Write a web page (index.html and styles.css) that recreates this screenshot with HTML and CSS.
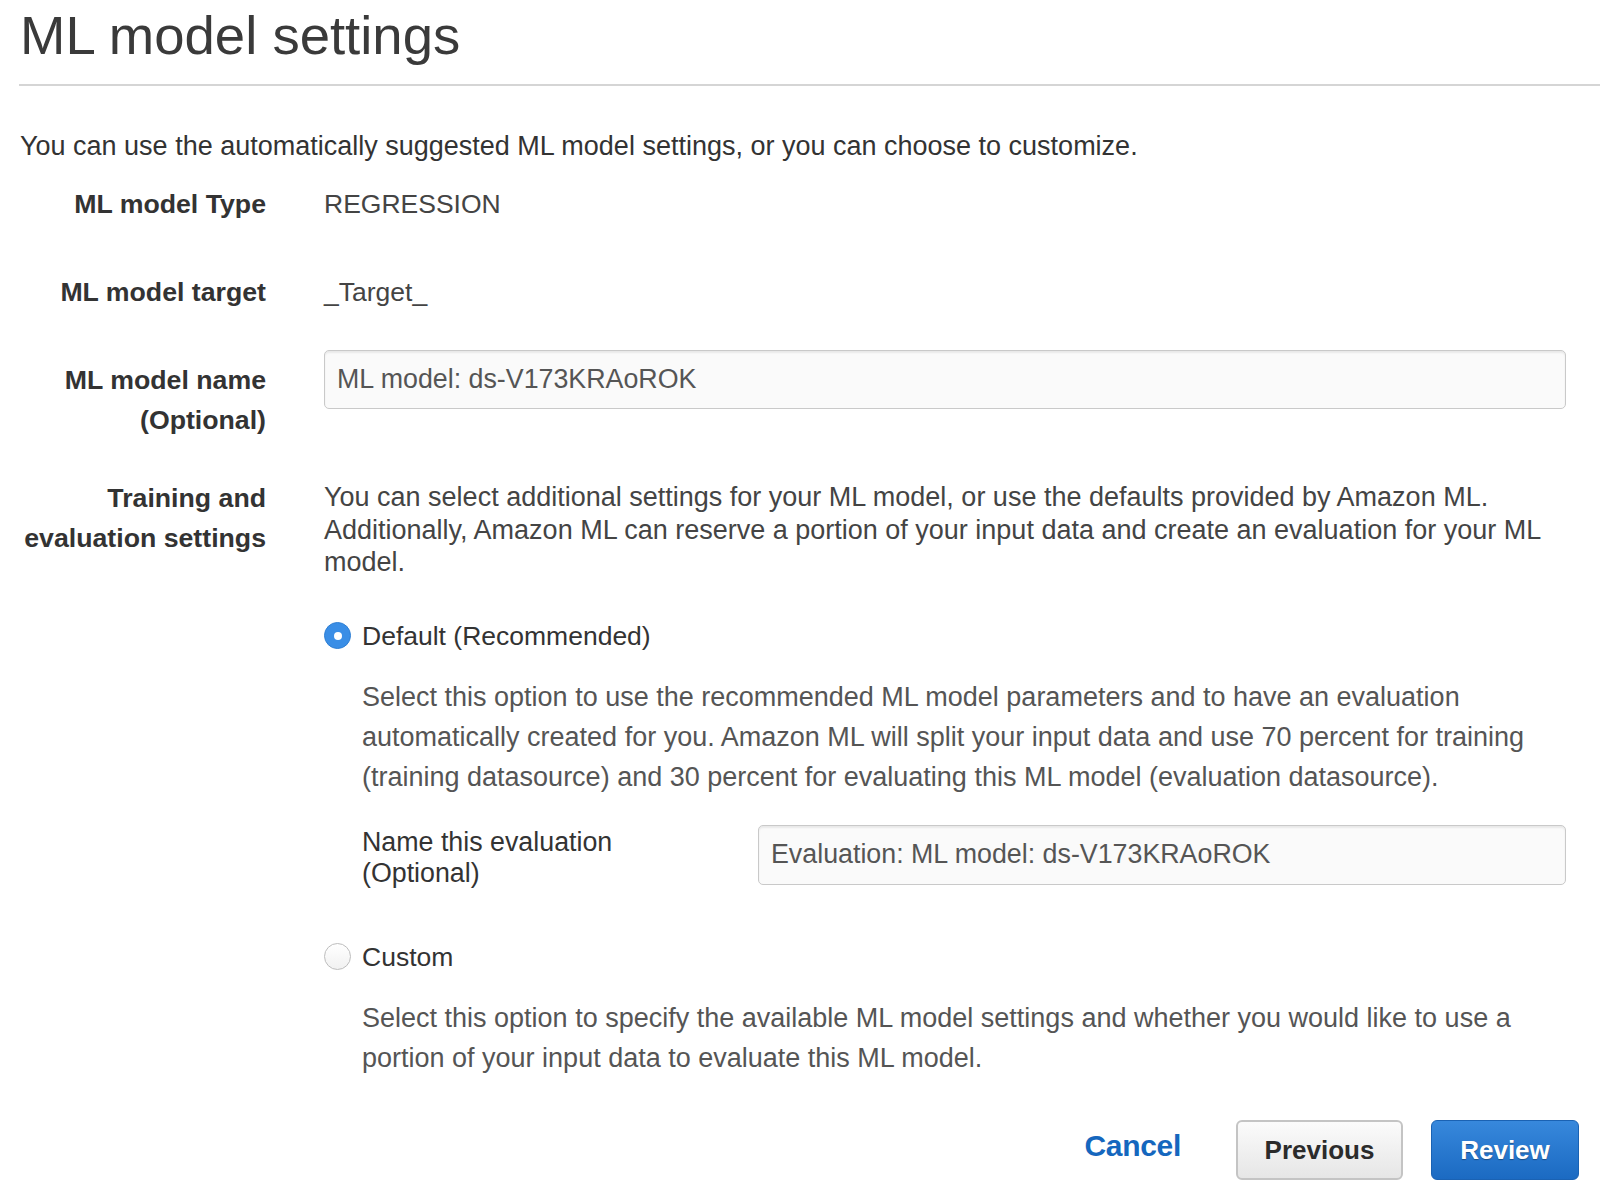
FILE: index.html
```html
<!DOCTYPE html>
<html>
<head>
<meta charset="utf-8">
<title>ML model settings</title>
<link rel="stylesheet" href="styles.css">
</head>
<body>
<div class="page">
  <header class="head">
    <h1 class="title">ML model settings</h1>
  </header>
  <p class="intro">You can use the automatically suggested ML model settings, or you can choose to customize.</p>

  <div class="form">
    <div class="row row-simple">
      <div class="label">ML model Type</div>
      <div class="value">REGRESSION</div>
    </div>
    <div class="row row-simple">
      <div class="label">ML model target</div>
      <div class="value">_Target_</div>
    </div>
    <div class="row row-input">
      <div class="label">ML model name<br>(Optional)</div>
      <div class="field"><input class="text-input" type="text" value="ML model: ds-V173KRAoROK"></div>
    </div>
    <div class="row row-training">
      <div class="label">Training and<br>evaluation settings</div>
      <div class="control">
        <p class="desc">You can select additional settings for your ML model, or use the defaults provided by Amazon ML. Additionally, Amazon ML can reserve a portion of your input data and create an evaluation for your ML model.</p>

        <div class="option option-default">
          <span class="radio radio-on"></span>
          <span class="option-label">Default (Recommended)</span>
        </div>
        <div class="option-body">
          <p class="option-desc">Select this option to use the recommended ML model parameters and to have an evaluation automatically created for you. Amazon ML will split your input data and use 70 percent for training (training datasource) and 30 percent for evaluating this ML model (evaluation datasource).</p>
          <div class="eval-row">
            <div class="eval-label">Name this evaluation<br>(Optional)</div>
            <input class="text-input eval-input" type="text" value="Evaluation: ML model: ds-V173KRAoROK">
          </div>
        </div>

        <div class="option option-custom">
          <span class="radio radio-off"></span>
          <span class="option-label">Custom</span>
        </div>
        <div class="option-body">
          <p class="option-desc">Select this option to specify the available ML model settings and whether you would like to use a portion of your input data to evaluate this ML model.</p>
        </div>
      </div>
    </div>
  </div>

  <div class="actions">
    <a class="cancel" href="#">Cancel</a>
    <button class="btn btn-prev" type="button">Previous</button>
    <button class="btn btn-review" type="button">Review</button>
  </div>
</div>
</body>
</html>
```

FILE: styles.css
```css
html, body {
  margin: 0;
  padding: 0;
  background: #fff;
}

body {
  font-family: "Liberation Sans", Arial, Helvetica, sans-serif;
  color: #444;
}

.page {
  padding: 0 21px 0 19px;
}

.head {
  border-bottom: 2px solid #d5d5d5;
  margin-right: -21px;
  padding: 4px 0 16px 1px;
}

.title {
  margin: 0;
  font-size: 54.5px;
  font-weight: normal;
  line-height: 64px;
  color: #3a3a3a;
}

.intro {
  margin: 44px 0 0 1px;
  font-size: 27px;
  line-height: 32px;
  color: #333;
}

.form {
  margin-top: 12px;
  padding-right: 13px;
}

.row {
  display: grid;
  grid-template-columns: 247px 1fr;
  column-gap: 58px;
  align-items: start;
}

.label {
  text-align: right;
  font-weight: bold;
  font-size: 26.7px;
  line-height: 40px;
  color: #333;
}

.value {
  font-size: 26.5px;
  line-height: 40px;
  color: #444;
  padding-top: 10px;
}

.row-simple .label {
  padding-top: 10px;
}

.row + .row {
  margin-top: 38px;
}

.row-input .label {
  padding-top: 10px;
}

.row-training {
  margin-top: 38px !important;
}

.text-input {
  display: block;
  box-sizing: border-box;
  width: 100%;
  height: 59px;
  margin: 0;
  padding: 0 12px;
  border: 1px solid #c9c9c9;
  border-radius: 5px;
  background: #fafafa;
  box-shadow: inset 0 2px 2px rgba(0, 0, 0, 0.07);
  font-family: "Liberation Sans", Arial, Helvetica, sans-serif;
  font-size: 26.8px;
  color: #555;
  outline: none;
}

.desc {
  margin: 0;
  padding-top: 3px;
  font-size: 27px;
  line-height: 32.5px;
  color: #444;
}

.option {
  display: flex;
  align-items: center;
  gap: 11px;
  height: 40px;
}

.option-default {
  margin-top: 37px;
}

.option-custom {
  margin-top: 48px;
}

.radio {
  box-sizing: border-box;
  width: 27px;
  height: 27px;
  border-radius: 50%;
  flex: none;
  position: relative;
}

.radio-on {
  background: #3a8ee6;
  border: 1px solid #2f7fd4;
}

.radio-on::after {
  content: "";
  position: absolute;
  left: 50%;
  top: 50%;
  width: 8px;
  height: 8px;
  margin: -4px 0 0 -4px;
  border-radius: 50%;
  background: #fff;
}

.radio-off {
  border: 1px solid #bdbdbd;
  background: linear-gradient(#ffffff, #f1f1f1);
}

.option-label {
  font-size: 26.5px;
  line-height: 40px;
  color: #333;
}

.option-body {
  padding-left: 38px;
}

.option-desc {
  margin: 21px 0 0;
  font-size: 27px;
  line-height: 40px;
  color: #555;
}

.eval-row {
  display: grid;
  grid-template-columns: 396px 1fr;
  align-items: start;
  margin-top: 28px;
}

.eval-label {
  padding-top: 2px;
  font-size: 26.8px;
  line-height: 31px;
  color: #333;
}

.eval-input {
  height: 60px;
}

.actions {
  display: flex;
  justify-content: flex-end;
  align-items: center;
  margin-top: 42px;
  padding-bottom: 21px;
}

.cancel {
  font-size: 30px;
  font-weight: bold;
  color: #1567be;
  text-decoration: none;
  margin-right: 55px;
  margin-top: -8px;
  letter-spacing: -0.3px;
}

.btn {
  box-sizing: border-box;
  height: 60px;
  border-radius: 6px;
  font-family: "Liberation Sans", Arial, Helvetica, sans-serif;
  font-weight: bold;
  font-size: 26px;
  padding-top: 3px;
  cursor: pointer;
}

.btn-prev {
  width: 167px;
  border: 2px solid #c4c4c4;
  background: linear-gradient(#fbfbfb, #e6e6e6);
  color: #2b2b2b;
}

.btn-review {
  width: 148px;
  margin-left: 28px;
  border: 1px solid #1a62b3;
  background: linear-gradient(#3788dc, #1b6ac2);
  color: #fff;
  text-shadow: 0 1px 1px rgba(0, 0, 0, 0.35);
}
```
